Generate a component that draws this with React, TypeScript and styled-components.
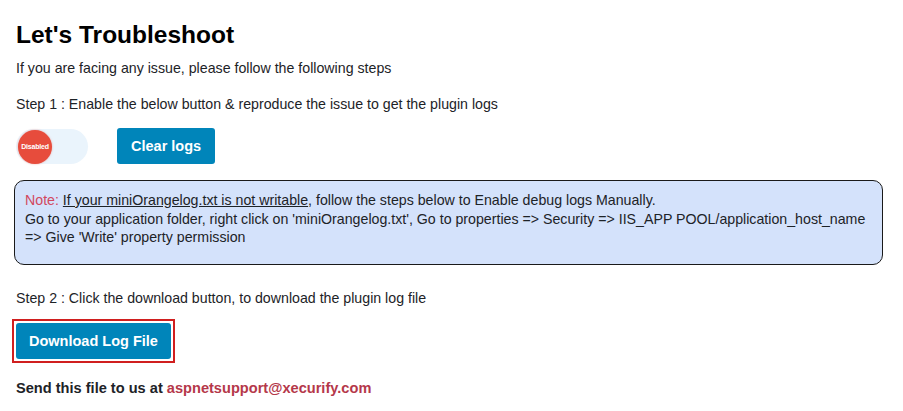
import styled, { createGlobalStyle } from "styled-components";

const GlobalStyle = createGlobalStyle`
  body {
    margin: 0;
    background: #fff;
    font-family: "Liberation Sans", Arial, sans-serif;
    color: #1d2327;
  }
`;

const Wrapper = styled.div`
  padding: 19px 19px 0 16px;
`;

const Title = styled.h2`
  margin: 0 0 8px;
  font-size: 24.5px;
  font-weight: 700;
  color: #000;
  line-height: 32px;
`;

const Text = styled.p<{ $gap?: number }>`
  margin: 0 0 ${(p) => p.$gap ?? 0}px;
  font-size: 14.2px;
  line-height: 18px;
  color: #1d2327;
`;

const Controls = styled.div`
  display: flex;
  align-items: center;
  gap: 29px;
  margin: 0 0 16px;
`;

const Toggle = styled.div`
  position: relative;
  width: 72px;
  height: 35px;
  border-radius: 18px;
  background: #eaf4fc;
`;

const Knob = styled.div`
  position: absolute;
  left: 2px;
  top: 1px;
  width: 34px;
  height: 34px;
  border-radius: 50%;
  background: #e74c3c;
  box-shadow: 0 0 2px rgba(231, 76, 60, 0.5);
  display: flex;
  align-items: center;
  justify-content: center;
  color: #fff;
  font-size: 7px;
  font-weight: 700;
  letter-spacing: -0.2px;
`;

const Button = styled.button<{ $pad?: number }>`
  border: none;
  border-radius: 3px;
  background: #0085ba;
  color: #fff;
  font-family: "Liberation Sans", Arial, sans-serif;
  font-weight: 700;
  font-size: 14.5px;
  height: 36px;
  padding: 0 ${(p) => p.$pad ?? 14}px;
  cursor: pointer;
`;

const NoteBox = styled.div`
  margin: 0 0 24px -2px;
  width: 869px;
  box-sizing: border-box;
  border: 1px solid #1a1a1a;
  border-radius: 10px;
  background: #d4e2fb;
  padding: 10px 10px 17px 10px;
  font-size: 14.2px;
  line-height: 18.5px;
  color: #1d2327;
`;

const NoteLabel = styled.span`
  color: #d2485f;
`;

const Underlined = styled.span`
  text-decoration: underline;
`;

const Highlight = styled.div`
  display: inline-block;
  border: 2px solid #d01f1f;
  padding: 2px;
  margin: 0 0 17px -4px;
`;

const Footer = styled.p`
  margin: 0;
  font-size: 14.6px;
  font-weight: 700;
  color: #1d2327;
`;

const Email = styled.span`
  color: #b5384a;
`;

export default function App() {
  return (
    <>
      <GlobalStyle />
      <Wrapper>
        <Title>Let's Troubleshoot</Title>
        <Text $gap={18}>If you are facing any issue, please follow the following steps</Text>
        <Text $gap={15}>Step 1 : Enable the below button &amp; reproduce the issue to get the plugin logs</Text>
        <Controls>
          <Toggle>
            <Knob>Disabled</Knob>
          </Toggle>
          <Button>Clear logs</Button>
        </Controls>
        <NoteBox>
          <NoteLabel>Note: </NoteLabel>
          <Underlined>If your miniOrangelog.txt is not writable</Underlined>, follow the steps below to Enable debug logs Manually.
          <br />
          Go to your application folder, right click on 'miniOrangelog.txt', Go to properties =&gt; Security =&gt; IIS_APP POOL/application_host_name
          <br />
          =&gt; Give 'Write' property permission
        </NoteBox>
        <Text $gap={12}>Step 2 : Click the download button, to download the plugin log file</Text>
        <Highlight>
          <Button $pad={13}>Download Log File</Button>
        </Highlight>
        <Footer>
          Send this file to us at <Email>aspnetsupport@xecurify.com</Email>
        </Footer>
      </Wrapper>
    </>
  );
}
